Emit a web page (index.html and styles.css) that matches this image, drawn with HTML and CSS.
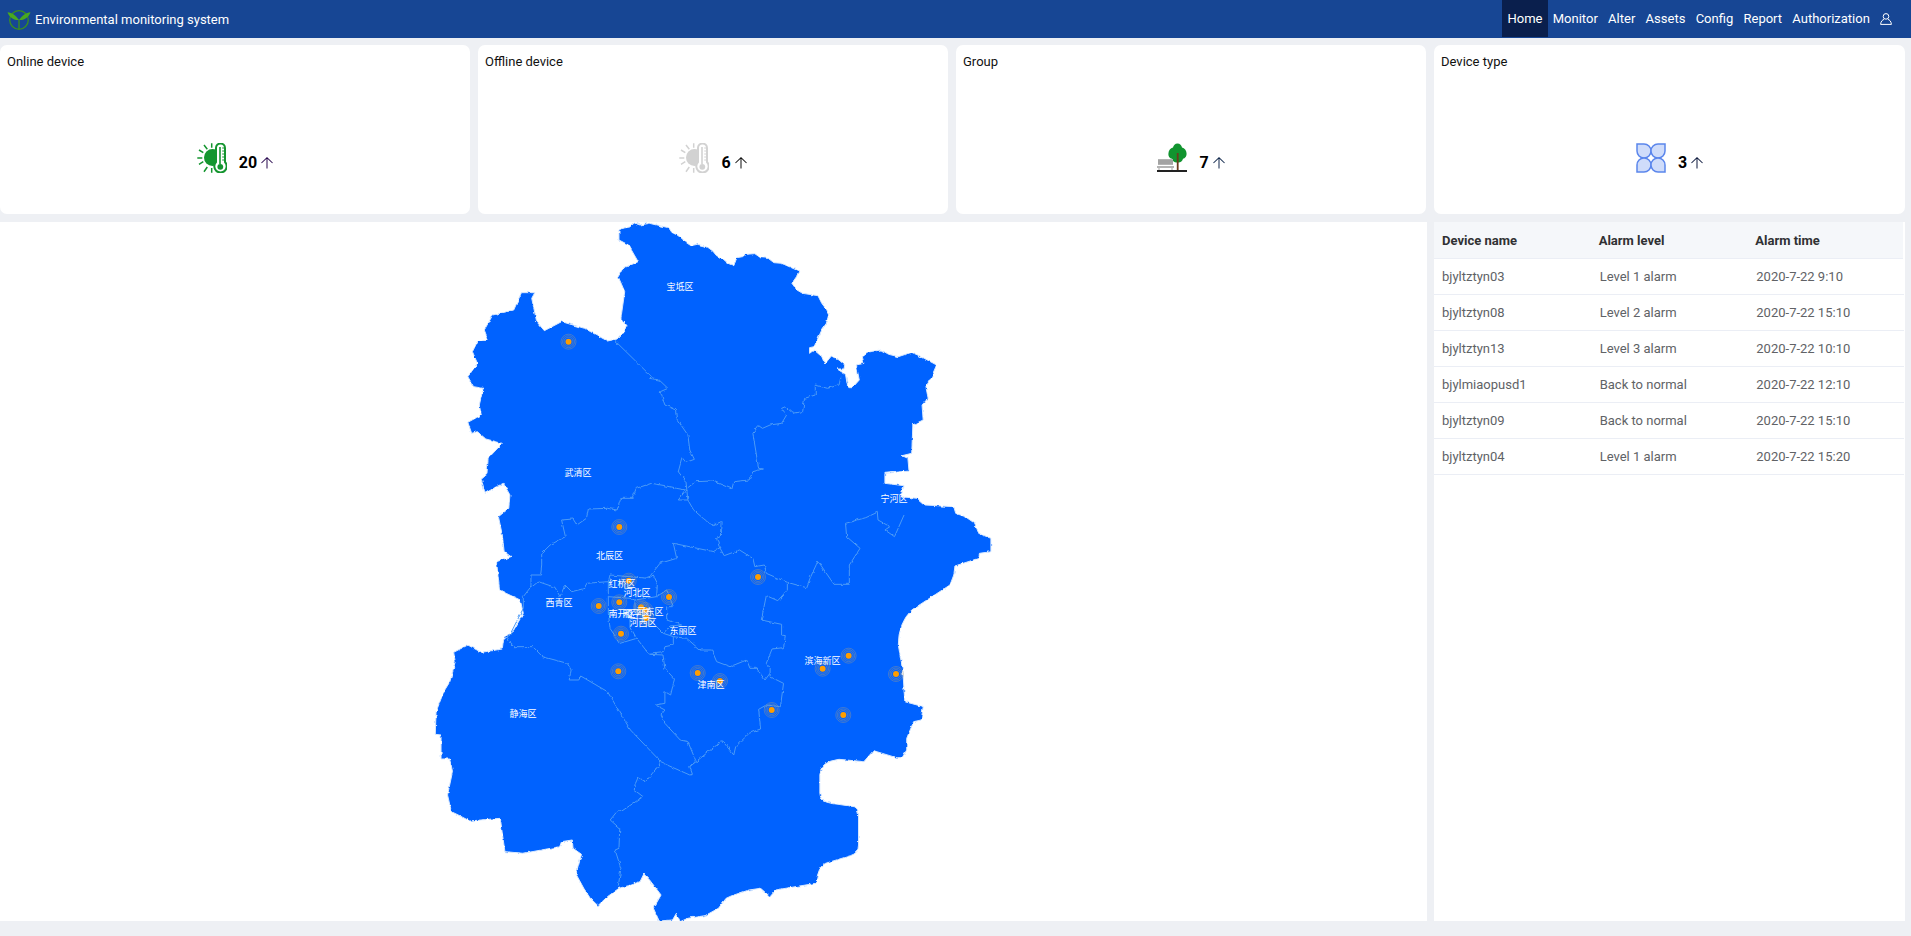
FILE: index.html
```html
<!DOCTYPE html>
<html lang="en">
<head>
<meta charset="utf-8">
<title>Environmental monitoring system</title>
<link rel="stylesheet" href="styles.css">
</head>
<body>
<svg class="defs" width="0" height="0" aria-hidden="true">
  <defs>
    <symbol id="sun" viewBox="0 0 30 30">
      <circle class="sun-fill" cx="15.500" cy="14.500" r="8.500"/>
      <path class="sun-line" d="M0.300 15H5.300M2 7L6.300 9.700M2 21.300L6.300 18.700M7 2L10.300 6.300M7 28.700L10.300 24M14.700 0.300V4.700M14.700 25V29.700"/>
      <path class="sun-tube" d="M19 19V5A4.500 4.500 0 0 1 28 5V19A6.200 6.200 0 1 1 19 19Z"/>
      <path class="sun-tick" d="M25.200 5H27.500M25.200 8H27.500M25.200 11H27.500M25.200 14H27.500M25.200 17H27.500"/>
      <path class="sun-stem" d="M23 4V21"/>
      <circle class="sun-fill" cx="23.300" cy="23.800" r="2.900"/>
    </symbol>
  </defs>
</svg>

<header class="topbar">
  <div class="brand">
    <svg class="logo" viewBox="0 0 24 21">
      <circle cx="12" cy="11" r="9.300" fill="none" stroke="#3a8f1f" stroke-width="1.300"/>
      <path d="M12 11V20.500" stroke="#3a8f1f" stroke-width="1.400"/>
      <path d="M12 11C9 6.500 5 3.600 0.500 3.200C2.400 8 6 11.400 12 11Z" fill="#49a91f"/>
      <path d="M12 11C15 6.500 19 3.600 23.500 3.200C21.600 8 18 11.400 12 11Z" fill="#49a91f"/>
    </svg>
    <span class="brand-name">Environmental monitoring system</span>
  </div>
  <nav class="nav">
    <a class="nav-item active">Home</a>
    <a class="nav-item">Monitor</a>
    <a class="nav-item">Alter</a>
    <a class="nav-item">Assets</a>
    <a class="nav-item">Config</a>
    <a class="nav-item">Report</a>
    <a class="nav-item">Authorization</a>
    <svg class="user" viewBox="0 0 12 12">
      <circle cx="6" cy="3.400" r="2.800"/>
      <path d="M0.600 11.400C0.800 8.200 2.600 6.800 4 6.400M11.400 11.400C11.200 8.200 9.400 6.800 8 6.400M0.600 11.400H11.400"/>
    </svg>
  </nav>
</header>

<main class="page">
  <section class="stats">
    <article class="card">
      <h2 class="card-title">Online device</h2>
      <div class="card-body">
        <svg class="card-icon icon-green"><use href="#sun"/></svg>
        <b class="count">20</b>
        <svg class="arrow arrow-purple" viewBox="0 0 13 13"><path d="M0.500 6.500L6.500 0.800L12.500 6.500M6.500 0.800V12.500"/></svg>
      </div>
    </article>
    <article class="card">
      <h2 class="card-title">Offline device</h2>
      <div class="card-body">
        <svg class="card-icon icon-gray"><use href="#sun"/></svg>
        <b class="count">6</b>
        <svg class="arrow arrow-amber" viewBox="0 0 13 13"><path d="M0.500 6.500L6.500 0.800L12.500 6.500M6.500 0.800V12.500"/></svg>
      </div>
    </article>
    <article class="card">
      <h2 class="card-title">Group</h2>
      <div class="card-body">
        <svg class="card-icon" viewBox="0 0 30 30">
          <path d="M20.500 0.500C23 0.500 24.500 2.500 25 4.500C27.500 5 29.500 7.500 29.500 10C30 13 28 15.500 26 15.800C25.500 18.500 23 20 20.500 19.500C18 20 15.500 18.500 15 15.800C12.500 15.500 11 13 11.500 10C11.500 7.500 13.500 5 16 4.500C16.500 2.500 18 0.500 20.500 0.500Z" fill="#11942f"/>
          <path d="M20.700 10V27.500" stroke="#6b3a1e" stroke-width="1.800"/>
          <path d="M1 16H16V22H1ZM0 23H17V25H0Z" fill="#b4b4b4"/>
          <path d="M1 18H16M1 20H16M2 25V27.500M15 25V27.500" stroke="#8c8c8c" stroke-width="0.800"/>
          <path d="M0 27H30V29H0Z" fill="#222"/>
        </svg>
        <b class="count">7</b>
        <svg class="arrow arrow-blue" viewBox="0 0 13 13"><path d="M0.500 6.500L6.500 0.800L12.500 6.500M6.500 0.800V12.500"/></svg>
      </div>
    </article>
    <article class="card">
      <h2 class="card-title">Device type</h2>
      <div class="card-body">
        <svg class="card-icon" viewBox="0 0 30 30">
          <g fill="#cfdcfa" stroke="#5b86ec" stroke-width="1.500">
            <path d="M1 1H8A7 7 0 1 1 1 8Z"/>
            <path d="M29 1H22A7 7 0 1 0 29 8Z"/>
            <path d="M1 29V22A7 7 0 1 1 8 29Z"/>
            <path d="M29 29H22A7 7 0 1 1 29 22Z"/>
          </g>
        </svg>
        <b class="count">3</b>
        <svg class="arrow arrow-navy" viewBox="0 0 13 13"><path d="M0.500 6.500L6.500 0.800L12.500 6.500M6.500 0.800V12.500"/></svg>
      </div>
    </article>
  </section>

  <section class="lower">
    <div class="map-panel">
      <svg class="map" viewBox="0 222 1427 699">
        <defs>
          <filter id="rough" filterUnits="userSpaceOnUse" x="0" y="222" width="1427" height="699" color-interpolation-filters="sRGB">
            <feTurbulence type="fractalNoise" baseFrequency=".2" numOctaves="2" seed="4" result="noise"/>
            <feDisplacementMap in="SourceGraphic" in2="noise" scale="3" xChannelSelector="R" yChannelSelector="G"/>
          </filter>
          <g id="pin">
            <circle class="ring" r="7.500"/>
            <circle class="ring" r="6"/>
            <circle class="ring" r="4.500"/>
            <circle class="dot" r="3"/>
          </g>
        </defs>
        <g filter="url(#rough)">
        <g transform="translate(420 215) scale(.38265 .33333)">
          <path class="land" d="M520 45L528 40L548 36L560 24L575 30L600 25L625 32L650 38L658 52L672 60L682 68L695 82L708 92L725 88L750 95L765 108L775 122L790 130L805 145L820 152L828 128L843 125L850 118L875 116L890 128L910 130L925 143L945 145L965 155L990 168L984 185L972 205L985 225L1000 235L1040 242L1050 265L1060 280L1068 300L1062 325L1050 345L1040 370L1030 395L1018 398L1018 415L1030 405L1050 425L1058 447L1075 423L1095 435L1110 450L1108 462L1090 462L1112 478L1118 518L1130 518L1148 495L1140 450L1160 445L1156 425L1175 410L1205 405L1225 418L1250 425L1285 412L1310 425L1350 450L1335 490L1322 515L1328 550L1312 570L1315 615L1288 630L1285 715L1260 722L1275 730L1278 768L1215 775L1215 805L1265 812L1255 845L1300 850L1320 870L1395 875L1400 895L1425 905L1450 925L1460 955L1492 970L1492 1010L1462 1015L1460 1030L1398 1053L1395 1080L1385 1110L1285 1185Q1250 1225 1250 1290L1262 1370L1267 1460L1315 1475L1310 1515L1290 1520L1272 1570L1272 1605L1260 1628L1245 1628L1185 1607L1160 1640L1095 1633Q1045 1640 1045 1680L1045 1735Q1045 1760 1075 1765L1135 1775Q1146 1780 1146 1800L1146 1890Q1146 1915 1125 1922L1060 1945Q1040 1955 1035 2005L945 2022L930 2025L915 2045L890 2020L860 2025L815 2042L800 2050L780 2080L745 2102L700 2110L680 2120L670 2095L660 2115L625 2118L610 2080L630 2040L600 1995L585 1977L575 2000L545 2012L520 2020L490 2045L465 2072L445 2050L428 2020L408 1978L422 1918L400 1900L398 1875L370 1880L365 1895L270 1915L222 1910L215 1855L210 1810L130 1818L100 1800L82 1790L72 1740L85 1670L78 1632L55 1632L55 1560L40 1558L42 1490L62 1430L78 1400L92 1340L88 1312L125 1290L160 1312L215 1302L218 1275L245 1245L270 1195L262 1155L225 1135L208 1125L200 1040L225 1030L238 1025L220 1010L215 960L205 905L232 880L235 840L218 805L200 815L170 835L160 790L175 775L178 730L215 685L172 672L150 650L135 655L125 622L160 600L155 570L165 520L140 515L125 485L150 445L137 410L150 380L178 375L168 345L190 300L245 285L265 233L300 233L292 250L305 320L325 347L370 320L430 340L490 378L515 372L543 335L525 310L535 230L518 185L530 160L570 140L545 90L520 75Z"/>
          <path class="border" d="M510 378L605 485L600 490L625 495L648 520L628 530L640 570L668 585L670 610L700 660L705 705L717 733L695 742L685 728L675 770L695 800L700 855"/>
          <path class="border" d="M1100 485L1095 510L1065 520L1033 510L1033 540L1005 550L1000 590L975 595L955 575L945 580L958 600L945 625L915 630L895 640L885 632L870 655L885 760L895 762L870 770L860 795L820 800L815 822L765 798L720 800L700 818"/>
          <path class="border" d="M700 855L675 855L695 825L670 820L640 812L605 805L565 820L555 850L525 850L515 885L490 880L440 882L435 910L410 930L400 912L370 915L380 965L340 990L318 1015L318 1050L315 1080L290 1080L290 1115L270 1145L270 1180L228 1275"/>
          <path class="border" d="M700 855L715 885L740 910L765 932L787 920L785 965L775 970L782 995L795 1022L835 1005L870 1030L875 1055L900 1050L905 1075L960 1102L1010 1118L1020 1088L1040 1038L1065 1080L1082 1108L1122 1108L1122 1050L1150 1000L1115 965L1112 925L1165 908L1195 892L1197 915L1228 935L1215 945L1240 965L1265 900"/>
          <path class="border" d="M960 1102L960 1125L935 1157L905 1142L892 1215L945 1228L945 1260L955 1262L950 1298L920 1302L905 1345L915 1360L915 1385L950 1405L942 1475L905 1470L885 1483L890 1542L860 1555L825 1595L820 1620L790 1577L705 1655L712 1678L705 1680L630 1642L590 1700L570 1687L562 1708L560 1725L583 1745L525 1790L518 1785L497 1815L522 1840L520 1900L510 1905L525 1960L518 2015"/>
          <path class="border" d="M228 1275L245 1295L295 1295L320 1325L385 1345L395 1365L390 1395L415 1395L420 1383L490 1430L550 1545L625 1635L630 1642"/>
          <path class="border" d="M705 1655L720 1635L700 1580L680 1575L640 1525L630 1500L640 1485L615 1470L640 1465L640 1430L655 1440L665 1392L640 1360L635 1320L600 1318L590 1305"/>
        </g>
        <g transform="translate(520 500) scale(.33333)">
          <path class="border" d="M605 140L580 155L460 130L470 175L420 190L385 235L270 225L265 245L200 250L195 265L155 275L135 255L120 290L105 262L55 245L30 265"/>
          <path class="border" d="M385 235L400 225L412 250L410 290L440 270L460 320L440 320L440 360L485 375L450 378L430 400"/>
          <path class="border" d="M265 245L265 290L330 295L345 300L345 330L330 350L330 380L350 415L385 460L430 455L435 440L460 435L460 410L500 415L540 450L575 450L590 485L630 500L680 480L690 505L710 505L735 540L750 520"/>
          <path class="border" d="M265 290L265 340L270 385L300 430L350 415"/>
          <path class="border" d="M345 300L410 290M345 330L400 370L430 400L460 410"/>
        </g>
        </g>
        <g class="pins">
          <use href="#pin" x="568.500" y="341.700"/>
          <use href="#pin" x="619.300" y="527"/>
          <use href="#pin" x="758" y="577"/>
          <use href="#pin" x="628.700" y="580.700"/>
          <use href="#pin" x="669" y="597"/>
          <use href="#pin" x="619.300" y="602.300"/>
          <use href="#pin" x="598.700" y="606"/>
          <use href="#pin" x="641" y="607.300"/>
          <use href="#pin" x="645.300" y="610"/>
          <use href="#pin" x="646.300" y="618"/>
          <use href="#pin" x="621" y="633.700"/>
          <use href="#pin" x="618.300" y="671.300"/>
          <use href="#pin" x="697.700" y="673"/>
          <use href="#pin" x="720" y="681"/>
          <use href="#pin" x="771.700" y="710"/>
          <use href="#pin" x="848.600" y="655.700"/>
          <use href="#pin" x="822.600" y="668.700"/>
          <use href="#pin" x="896" y="674"/>
          <use href="#pin" x="843.300" y="715"/>
        </g>
        <g class="labels">
          <text x="680" y="289.500">宝坻区</text>
          <text x="578" y="475.500">武清区</text>
          <text x="894" y="501.500">宁河区</text>
          <text x="609.500" y="558.500">北辰区</text>
          <text x="622" y="586.500">红桥区</text>
          <text x="637" y="595.500">河北区</text>
          <text x="559" y="605.500">西青区</text>
          <text x="622" y="616.500">南开区</text>
          <text x="637" y="616.500">和平区</text>
          <text x="650" y="614.500">河东区</text>
          <text x="643" y="625.500">河西区</text>
          <text x="683" y="633.500">东丽区</text>
          <text x="711" y="687.500">津南区</text>
          <text x="822.600" y="663.500">滨海新区</text>
          <text x="523" y="716.500">静海区</text>
        </g>
      </svg>
    </div>
    <div class="table-panel">
      <table class="alarms">
        <thead>
          <tr><th>Device name</th><th>Alarm level</th><th>Alarm time</th></tr>
        </thead>
        <tbody>
          <tr><td>bjyltztyn03</td><td>Level 1 alarm</td><td>2020-7-22 9:10</td></tr>
          <tr><td>bjyltztyn08</td><td>Level 2 alarm</td><td>2020-7-22 15:10</td></tr>
          <tr><td>bjyltztyn13</td><td>Level 3 alarm</td><td>2020-7-22 10:10</td></tr>
          <tr><td>bjylmiaopusd1</td><td>Back to normal</td><td>2020-7-22 12:10</td></tr>
          <tr><td>bjyltztyn09</td><td>Back to normal</td><td>2020-7-22 15:10</td></tr>
          <tr><td>bjyltztyn04</td><td>Level 1 alarm</td><td>2020-7-22 15:20</td></tr>
        </tbody>
      </table>
    </div>
  </section>
</main>
</body>
</html>
```
FILE: styles.css
```css
* { box-sizing: border-box; }
html, body { margin: 0; height: 100%; overflow: hidden; }
body {
  background: #eef0f4;
  font-family: Roboto, "Noto Sans CJK SC", sans-serif;
  font-size: 13px;
  color: #111;
}
.defs { position: absolute; }

.topbar {
  display: flex;
  justify-content: space-between;
  height: 38px;
  background: #174694;
  color: #fff;
}
.brand { display: flex; align-items: center; gap: 4px; padding-left: 7px; }
.logo { width: 24px; height: 21px; }
.brand-name { white-space: nowrap; }
.nav { display: flex; align-items: flex-start; padding-right: 19px; }
.nav-item { height: 37px; line-height: 37px; padding: 0 5.150px; white-space: nowrap; }
.nav-item.active { background: #0a1f4d; }
.user { width: 12px; height: 12px; margin: 13px 0 0 5px; fill: none; stroke: #fff; stroke-width: 1; }

.page { width: 1905px; padding-top: 7px; }
.stats { display: grid; grid-template-columns: repeat(3, 470px) 471px; gap: 8px; }
.card { height: 169px; background: #fff; border-radius: 7px; padding: 8px 7px; display: flex; flex-direction: column; }
.card-title { margin: 0; font-size: 13px; font-weight: 400; line-height: 18px; color: #111; }
.card-body { display: flex; align-items: center; justify-content: center; margin-top: 71px; height: 42px; }
.card-icon { width: 30px; height: 30px; margin-right: 12px; margin-top: -10px; flex: none; }
.count { font-size: 16px; font-weight: 700; line-height: 20px; color: #000; }
.arrow { width: 12px; height: 12px; margin-left: 4px; fill: none; stroke-width: 1.100; }
.arrow-purple { stroke: #2a0a50; }
.arrow-amber { stroke: #111; }
.arrow-blue { stroke: #12294d; }
.arrow-navy { stroke: #101c40; }

.icon-green { color: #14952f; }
.icon-gray { color: #d2d2d2; }
.sun-fill { fill: currentColor; stroke: none; }
.sun-line, .sun-tube, .sun-stem, .sun-tick { fill: none; stroke: currentColor; }
.sun-line { stroke-width: 1.500; }
.sun-tube { stroke-width: 2; fill: #fff; }
.sun-stem { stroke-width: 1.600; }
.sun-tick { stroke-width: 1; }

.lower { display: grid; grid-template-columns: 1427px 471px; gap: 7px; margin-top: 8px; }
.map-panel, .table-panel { height: 699px; background: #fff; }
.map { display: block; width: 1427px; height: 699px; }
.land { fill: #0062ff; stroke: #d7e8ff; stroke-width: 1; stroke-linejoin: round; vector-effect: non-scaling-stroke; }
.border { fill: none; stroke: #4c9bf7; stroke-width: 1; stroke-linejoin: round; vector-effect: non-scaling-stroke; }
.ring { fill: none; stroke: #b5a27c; stroke-width: 0.500; opacity: .75; }
.dot { fill: #ff9d00; }
.labels text { fill: #fff; font-family: "Noto Sans CJK SC", sans-serif; font-size: 9px; text-anchor: middle; }

.alarms { width: 100%; border-collapse: collapse; table-layout: fixed; font-size: 13px; }
.alarms th { height: 36px; background: #f5f7fa; background-clip: padding-box; border-right: 2px solid #fff; text-align: left; font-weight: 700; color: #303133; padding: 2px 8px 0; border-bottom: 1px solid #ebeef5; }
.alarms th:nth-child(1), .alarms th:nth-child(2) { border-right: 0; }
.alarms td { height: 36.170px; padding: 0 9px; color: #606266; border-bottom: 1px solid #ebeef5; }
.alarms td:first-child { padding-left: 8px; }
```
